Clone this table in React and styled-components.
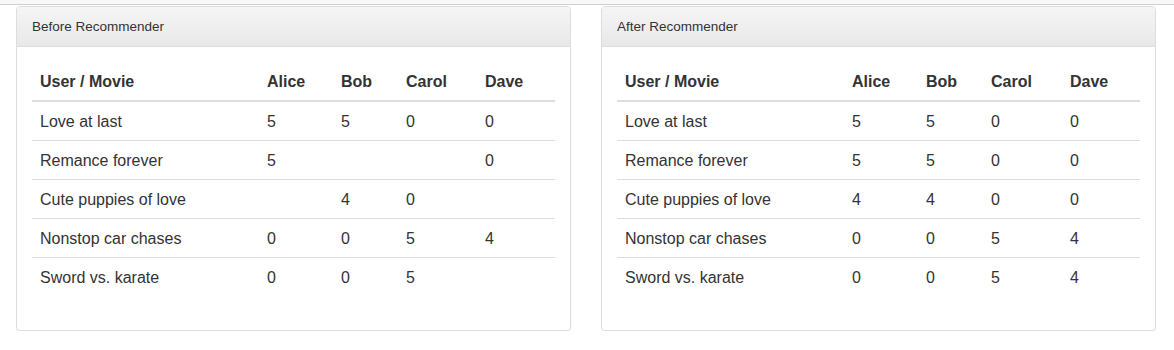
import styled, { createGlobalStyle } from 'styled-components'

const GlobalStyle = createGlobalStyle`
  body {
    margin: 0;
    background: #fff;
    font-family: "Liberation Sans", Arial, Helvetica, sans-serif;
    color: #333;
  }
`

const users = ['Alice', 'Bob', 'Carol', 'Dave']

const before = [
  ['Love at last', 5, 5, 0, 0],
  ['Remance forever', 5, '', '', 0],
  ['Cute puppies of love', '', 4, 0, ''],
  ['Nonstop car chases', 0, 0, 5, 4],
  ['Sword vs. karate', 0, 0, 5, ''],
]

const after = [
  ['Love at last', 5, 5, 0, 0],
  ['Remance forever', 5, 5, 0, 0],
  ['Cute puppies of love', 4, 4, 0, 0],
  ['Nonstop car chases', 0, 0, 5, 4],
  ['Sword vs. karate', 0, 0, 5, 4],
]

// outer column widths, cell padding included
const colWidths = [227, 74, 65, 79, 78]

function RatingsPanel({ title, rows }) {
  return (
    <Panel>
      <PanelHeading>{title}</PanelHeading>
      <PanelBody>
        <Table>
          <colgroup>
            {colWidths.map((w, i) => (
              <col key={i} style={{ width: w }} />
            ))}
          </colgroup>
          <thead>
            <tr>
              <Th>User / Movie</Th>
              {users.map((u) => (
                <Th key={u}>{u}</Th>
              ))}
            </tr>
          </thead>
          <tbody>
            {rows.map((row) => (
              <tr key={row[0]}>
                {row.map((cell, i) => (
                  <Td key={i}>{cell}</Td>
                ))}
              </tr>
            ))}
          </tbody>
        </Table>
      </PanelBody>
    </Panel>
  )
}

export default function App() {
  return (
    <>
      <GlobalStyle />
      <TopBar />
      <Row>
        <RatingsPanel title="Before Recommender" rows={before} />
        <RatingsPanel title="After Recommender" rows={after} />
      </Row>
    </>
  )
}

const TopBar = styled.div`
  height: 4px;
  background: #f8f8f8;
  border-bottom: 1px solid #cfcfcf;
`

const Row = styled.div`
  display: flex;
  gap: 30px;
  padding: 1px 0 0 16px;
`

const Panel = styled.div`
  width: 555px;
  box-sizing: border-box;
  background: #fff;
  border: 1px solid #ddd;
  border-radius: 4px;
  box-shadow: 0 1px 1px rgba(0, 0, 0, 0.05);
  overflow: hidden;
`

const PanelHeading = styled.div`
  padding: 10px 15px;
  font-size: 13.5px;
  line-height: 19px;
  color: #333;
  background: linear-gradient(to bottom, #f5f5f5 0%, #e8e8e8 100%);
  border-bottom: 1px solid #ddd;
`

const PanelBody = styled.div`
  padding: 15px;
`

const Table = styled.table`
  width: 100%;
  border-collapse: collapse;
  border-spacing: 0;
  margin-bottom: 19px;
  font-size: 16px;
  line-height: 22px;
  table-layout: fixed;
`

const Th = styled.th`
  padding: 9px 8px 7px;
  text-align: left;
  font-weight: bold;
  border-bottom: 2px solid #ddd;
`

const Td = styled.td`
  padding: 9px 8px 7px;
  border-top: 1px solid #ddd;
`
